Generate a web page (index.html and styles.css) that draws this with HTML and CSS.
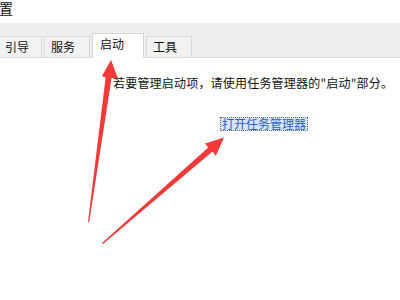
FILE: index.html
```html
<!DOCTYPE html>
<html>
<head>
<meta charset="utf-8">
<title>系统配置</title>
<link rel="stylesheet" href="styles.css">
</head>
<body>
<div class="dialog">
	<div class="title">系统配置</div>
	<ul class="tabs">
		<li class="tab first">引导</li>
		<li class="tab">服务</li>
		<li class="tab active">启动</li>
		<li class="tab">工具</li>
	</ul>
	<div class="panel">
		<p class="note">若要管理启动项，请使用任务管理器的"启动"部分。</p>
		<a class="link" href="#">打开任务管理器</a>
	</div>
	<!-- 标注箭头 -->
	<svg class="marks" width="400" height="300" viewBox="0 0 400 300">
		<polygon points="88,222 105.6,77.5 102,76 111,60 118,78.5 111.6,78 89.2,222"/>
		<polygon points="102,243 208.2,147.6 205,143.4 224,137.5 215.8,156 212.6,151.6 103,244"/>
	</svg>
</div>
</body>
</html>
```

FILE: styles.css
```css
*{ margin:0; padding:0;}
body{ background:#fff; font:12px/1.2 "Noto Sans CJK SC","Liberation Sans",sans-serif; color:#111; overflow:hidden;}
li{ list-style:none;}
.dialog{ width:400px; height:300px; position:relative; overflow:hidden;}
.title{ height:23px; line-height:17px; font-size:14px; margin-left:-43px; color:#111;}
.tabs{ display:flex; align-items:flex-end; gap:2px; height:34px; background:#eeeeee; border-bottom:1px solid #dcdcdc; margin-left:-8px;}
.tab{ width:38px; height:20px; line-height:20px; padding-left:6px; background:#f2f2f2; border:1px solid #dadada; border-bottom:none;}
.tab.first{ width:36px; padding-left:12px;}
.tab.active{ width:43px; height:24px; line-height:20px; padding-left:7px; background:#fff; margin-bottom:-1px; border-color:#d6d6d6;}
.panel{ padding:18px 0 0 113px;}
.note{ line-height:14px; white-space:nowrap; letter-spacing:0.2px;}
.link{ display:inline-block; margin:27px 0 0 107px; padding:0 1px; line-height:12px; color:#2a62c9; text-decoration:none; background:#d8e3f3; border:1px dotted #6a6a6a;}
.marks{ position:absolute; left:0; top:0;}
.marks polygon{ fill:#f23a3a;}
```
